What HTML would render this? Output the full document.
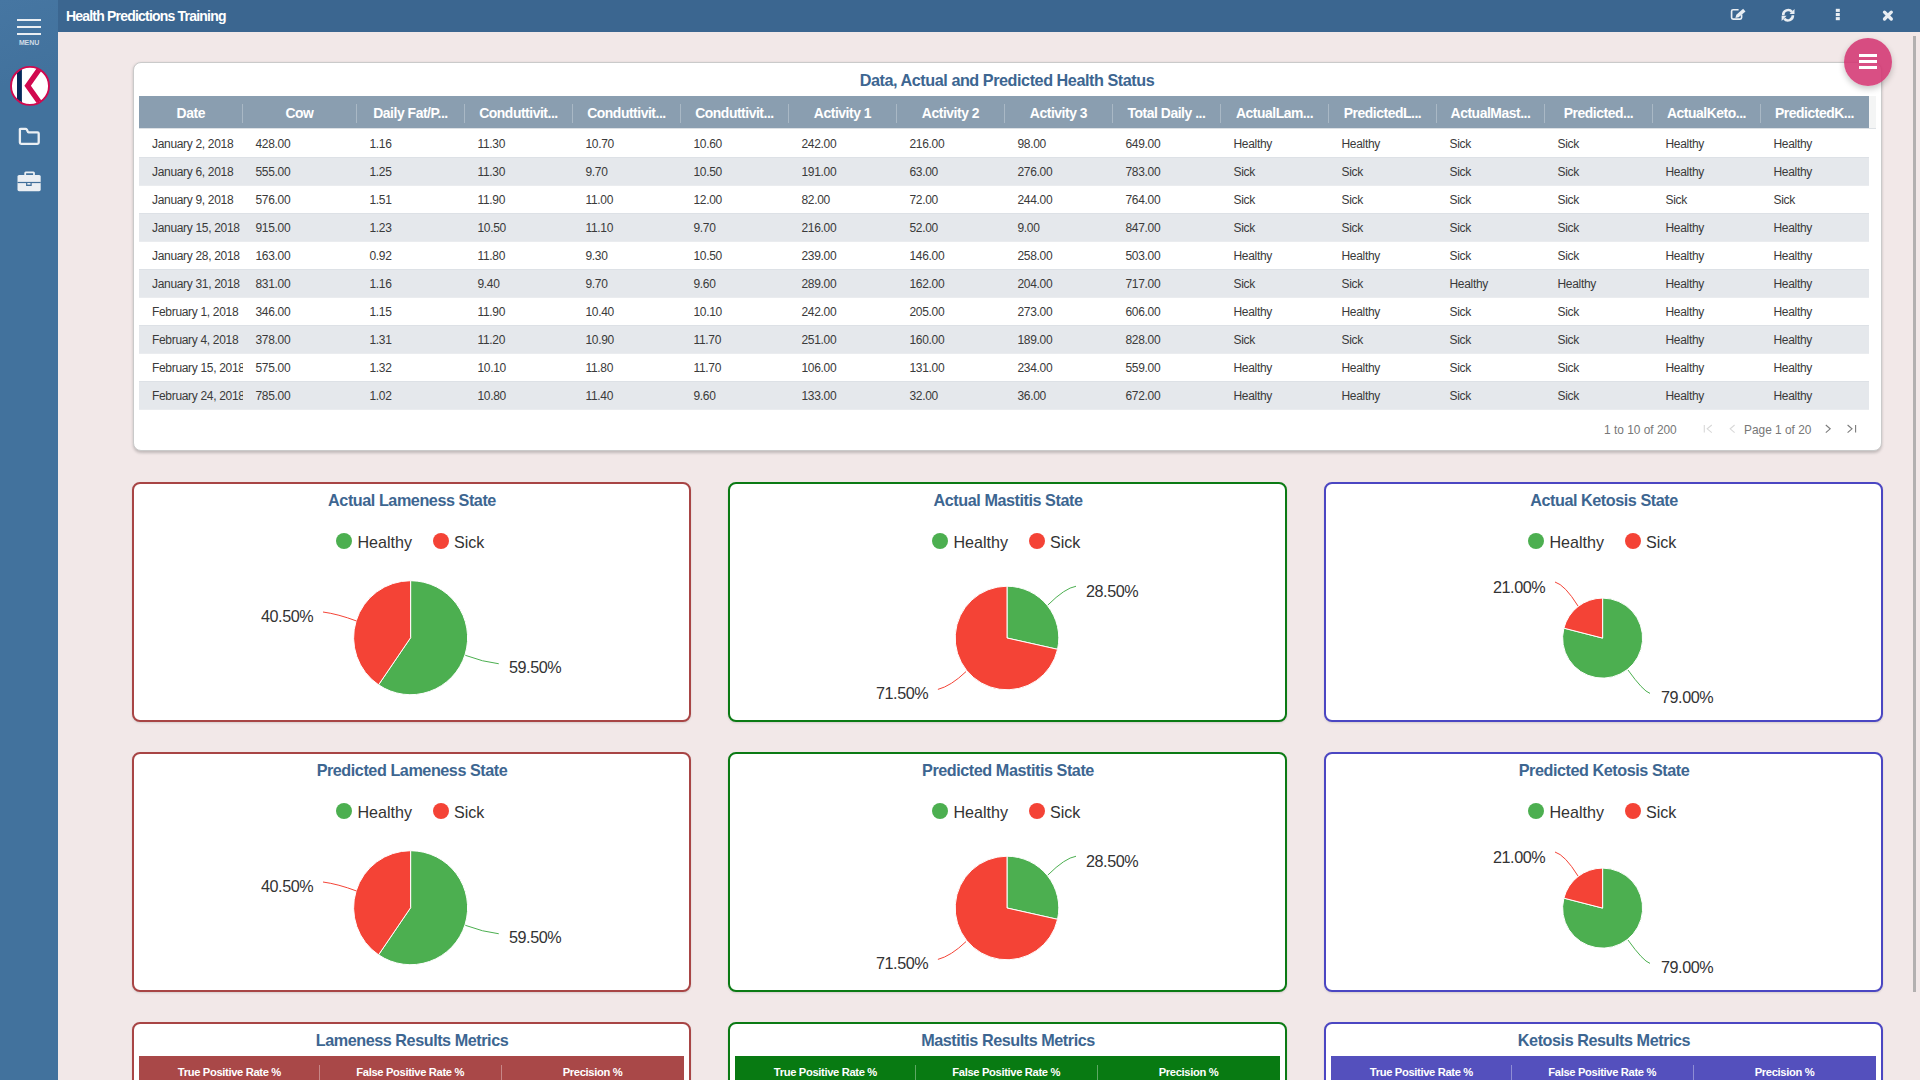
<!DOCTYPE html><html><head><meta charset="utf-8"><title>Health Predictions Training</title><style>
*{box-sizing:border-box;margin:0;padding:0}
html,body{width:1920px;height:1080px;overflow:hidden;background:#f2e8e8;font-family:"Liberation Sans",sans-serif}
.abs{position:absolute}
#side{left:0;top:0;width:58px;height:1080px;background:linear-gradient(160deg,#4676a2 0%,#42729d 8%,#42729d 100%)}
#top{left:58px;top:0;width:1862px;height:32px;background:#3b6690}
#top .t{position:absolute;left:8px;top:8px;color:#fff;font-weight:bold;font-size:14px;letter-spacing:-0.8px;line-height:16px}
.card{position:absolute;background:#fff;border-radius:8px}
#tcard{left:133px;top:62px;width:1749px;height:388.5px;box-shadow:0 1.5px 3px rgba(0,0,0,.2);border:1.5px solid #cacaca}
.ctitle{position:absolute;left:0;width:100%;text-align:center;color:#3d6691;font-weight:bold;font-size:16.2px;letter-spacing:-0.45px;line-height:18px}
.hdr{position:absolute;left:139px;top:96px;width:1730px;height:32px;background:#8a9eb0}
.hcell{position:absolute;top:1px;height:32px;line-height:32px;text-align:center;color:#fff;font-weight:bold;font-size:13.9px;letter-spacing:-0.45px;white-space:nowrap;overflow:hidden}
.hdiv{position:absolute;top:8px;width:1px;height:19px;background:#a9b8c5}
.row{position:absolute;left:139px;width:1730px;height:28px}
.row.alt{background:#e5e8ec;box-shadow:inset 0 1px #dde1e6,0 1px #eaecef}
.cell{position:absolute;top:1px;height:28px;line-height:28px;padding-left:13px;color:#3a3a3a;font-size:12px;letter-spacing:-0.32px;white-space:nowrap;overflow:hidden}
.pag{position:absolute;top:422px;font-size:11.9px;color:#777;line-height:16px;white-space:nowrap}
.pcard{position:absolute;width:558px;height:239px;border:2px solid #a84545;border-radius:8px;background:#fff;box-shadow:0 1px 2px rgba(0,0,0,.12)}
.leg{position:absolute;font-size:16.1px;color:#333;line-height:20px;white-space:nowrap}
.dot{position:absolute;width:16px;height:16px;border-radius:50%}
.plab{position:absolute;font-size:16.2px;letter-spacing:-0.45px;color:#333;line-height:18px;white-space:nowrap;margin-top:-1.1px}
.mhdr{position:absolute;height:32px}
.mcell{position:absolute;top:0;height:32px;line-height:32px;text-align:center;color:#fff;font-weight:bold;font-size:11.2px;letter-spacing:-0.35px;white-space:nowrap}
.mdiv{position:absolute;top:9px;width:1px;height:24px;background:rgba(255,255,255,.35)}
</style></head><body>
<div id="side" class="abs">
<div class="abs" style="left:17px;top:19px;width:24px;height:2px;background:#ebeff3"></div>
<div class="abs" style="left:17px;top:26px;width:24px;height:2px;background:#ebeff3"></div>
<div class="abs" style="left:17px;top:33px;width:24px;height:2px;background:#ebeff3"></div>
<div class="abs" style="left:0;top:39px;width:58px;text-align:center;color:#cfdbe6;font-size:7px;font-weight:bold;line-height:8px;letter-spacing:-0.1px">MENU</div>
<svg class="abs" style="left:0;top:60px" width="58" height="140" viewBox="0 0 58 140">
<defs><clipPath id="lc"><circle cx="30" cy="25.9" r="18.6"/></clipPath></defs>
<circle cx="30" cy="25.9" r="19" fill="#fff"/>
<g clip-path="url(#lc)">
<rect x="17" y="0" width="4.9" height="60" fill="#06295a"/>
<polyline points="42.05,5.3 27.65,25.7 42.05,46.1" fill="none" stroke="#d1084e" stroke-width="5.3" stroke-miterlimit="10"/>
</g>
<circle cx="30" cy="25.9" r="19" fill="none" stroke="#d1084e" stroke-width="1.9"/>
<path d="M19.9,69 Q19.9,68.8 21,68.8 L25.5,68.8 Q26.3,68.8 26.8,69.6 L27.6,71.2 Q27.9,72.3 28.6,72.3 L37.4,72.3 Q38.7,72.3 38.7,73.6 L38.7,82.6 Q38.7,83.9 37.4,83.9 L21.2,83.9 Q19.9,83.9 19.9,82.6 Z" fill="none" stroke="#ebeff3" stroke-width="2.3" stroke-linejoin="round"/>
<path d="M25.2,115.5 L25.2,113 Q25.2,112.4 25.8,112.4 L33.4,112.4 Q34,112.4 34,113 L34,115.5" fill="none" stroke="#ebeff3" stroke-width="1.8"/>
<rect x="17.5" y="115" width="23.2" height="16.2" rx="1.6" fill="#ebeff3"/>
<rect x="17.5" y="121.9" width="23.2" height="1.2" fill="#41709b"/>
<rect x="26.1" y="123" width="5.6" height="3" fill="#41709b"/>
<rect x="27.3" y="123" width="3.2" height="1.6" fill="#ebeff3"/>
</svg>
</div>
<div id="top" class="abs"><div class="t">Health Predictions Training</div></div>
<svg class="abs" style="left:1722px;top:2px" width="180" height="26" viewBox="0 0 180 26">
<path d="M16.6,7.7 L11.1,7.7 Q9.6,7.7 9.6,9.2 L9.6,15.6 Q9.6,17.1 11.1,17.1 L18.1,17.1 Q19.6,17.1 19.6,15.6 L19.6,12.6" fill="none" stroke="#e9eef3" stroke-width="1.65"/>
<polygon points="13.4,15.9 14.33,12.63 21.13,6.83 23.47,9.57 16.67,15.37" fill="#e9eef3"/>
<path d="M61.2,13.2 A4.9,4.9 0 0 1 69.9,9.9" fill="none" stroke="#e9eef3" stroke-width="2.6"/>
<polygon points="72.5,7.1 72.5,12.1 67.5,12.1" fill="#e9eef3"/>
<path d="M70.9,13.3 A4.9,4.9 0 0 1 62.2,16.6" fill="none" stroke="#e9eef3" stroke-width="2.6"/>
<polygon points="59.6,18.9 59.6,13.75 64.6,13.75" fill="#e9eef3"/>
<rect x="113.8" y="6.8" width="4" height="3.1" fill="#e9eef3"/>
<rect x="113.8" y="11" width="4" height="3.1" fill="#e9eef3"/>
<rect x="113.8" y="15.1" width="4" height="3.1" fill="#e9eef3"/>
<path d="M162.5,10.2 L169.3,17 M169.3,10.2 L162.5,17" stroke="#e9eef3" stroke-width="3.3" stroke-linecap="round"/>
</svg>
<div id="tcard" class="card"></div>
<div class="ctitle" style="left:133px;width:1748px;top:70.8px">Data, Actual and Predicted Health Status</div>
<div class="hdr">
<div class="hcell" style="left:0.0px;width:103.5px">Date</div>
<div class="hdiv" style="left:102.5px"></div>
<div class="hcell" style="left:103.5px;width:114.0px">Cow</div>
<div class="hdiv" style="left:216.5px"></div>
<div class="hcell" style="left:217.5px;width:108.0px">Daily Fat/P...</div>
<div class="hdiv" style="left:324.5px"></div>
<div class="hcell" style="left:325.5px;width:108.0px">Conduttivit...</div>
<div class="hdiv" style="left:432.5px"></div>
<div class="hcell" style="left:433.5px;width:108.0px">Conduttivit...</div>
<div class="hdiv" style="left:540.5px"></div>
<div class="hcell" style="left:541.5px;width:108.0px">Conduttivit...</div>
<div class="hdiv" style="left:648.5px"></div>
<div class="hcell" style="left:649.5px;width:108.0px">Activity 1</div>
<div class="hdiv" style="left:756.5px"></div>
<div class="hcell" style="left:757.5px;width:108.0px">Activity 2</div>
<div class="hdiv" style="left:864.5px"></div>
<div class="hcell" style="left:865.5px;width:108.0px">Activity 3</div>
<div class="hdiv" style="left:972.5px"></div>
<div class="hcell" style="left:973.5px;width:108.0px">Total Daily ...</div>
<div class="hdiv" style="left:1080.5px"></div>
<div class="hcell" style="left:1081.5px;width:108.0px">ActualLam...</div>
<div class="hdiv" style="left:1188.5px"></div>
<div class="hcell" style="left:1189.5px;width:108.0px">PredictedL...</div>
<div class="hdiv" style="left:1296.5px"></div>
<div class="hcell" style="left:1297.5px;width:108.0px">ActualMast...</div>
<div class="hdiv" style="left:1404.5px"></div>
<div class="hcell" style="left:1405.5px;width:108.0px">Predicted...</div>
<div class="hdiv" style="left:1512.5px"></div>
<div class="hcell" style="left:1513.5px;width:108.0px">ActualKeto...</div>
<div class="hdiv" style="left:1620.5px"></div>
<div class="hcell" style="left:1621.5px;width:108.0px">PredictedK...</div>
</div>
<div class="abs" style="left:139px;top:128px;width:1737px;height:1px;background:#dde1e5"></div>
<div class="abs" style="left:1869px;top:96px;width:7px;height:32px;background:#f4f5f5"></div>
<div class="row" style="top:129px">
<div class="cell" style="left:0.0px;width:103.5px">January 2, 2018</div>
<div class="cell" style="left:103.5px;width:114.0px">428.00</div>
<div class="cell" style="left:217.5px;width:108.0px">1.16</div>
<div class="cell" style="left:325.5px;width:108.0px">11.30</div>
<div class="cell" style="left:433.5px;width:108.0px">10.70</div>
<div class="cell" style="left:541.5px;width:108.0px">10.60</div>
<div class="cell" style="left:649.5px;width:108.0px">242.00</div>
<div class="cell" style="left:757.5px;width:108.0px">216.00</div>
<div class="cell" style="left:865.5px;width:108.0px">98.00</div>
<div class="cell" style="left:973.5px;width:108.0px">649.00</div>
<div class="cell" style="left:1081.5px;width:108.0px">Healthy</div>
<div class="cell" style="left:1189.5px;width:108.0px">Healthy</div>
<div class="cell" style="left:1297.5px;width:108.0px">Sick</div>
<div class="cell" style="left:1405.5px;width:108.0px">Sick</div>
<div class="cell" style="left:1513.5px;width:108.0px">Healthy</div>
<div class="cell" style="left:1621.5px;width:108.0px">Healthy</div>
</div>
<div class="row alt" style="top:157px">
<div class="cell" style="left:0.0px;width:103.5px">January 6, 2018</div>
<div class="cell" style="left:103.5px;width:114.0px">555.00</div>
<div class="cell" style="left:217.5px;width:108.0px">1.25</div>
<div class="cell" style="left:325.5px;width:108.0px">11.30</div>
<div class="cell" style="left:433.5px;width:108.0px">9.70</div>
<div class="cell" style="left:541.5px;width:108.0px">10.50</div>
<div class="cell" style="left:649.5px;width:108.0px">191.00</div>
<div class="cell" style="left:757.5px;width:108.0px">63.00</div>
<div class="cell" style="left:865.5px;width:108.0px">276.00</div>
<div class="cell" style="left:973.5px;width:108.0px">783.00</div>
<div class="cell" style="left:1081.5px;width:108.0px">Sick</div>
<div class="cell" style="left:1189.5px;width:108.0px">Sick</div>
<div class="cell" style="left:1297.5px;width:108.0px">Sick</div>
<div class="cell" style="left:1405.5px;width:108.0px">Sick</div>
<div class="cell" style="left:1513.5px;width:108.0px">Healthy</div>
<div class="cell" style="left:1621.5px;width:108.0px">Healthy</div>
</div>
<div class="row" style="top:185px">
<div class="cell" style="left:0.0px;width:103.5px">January 9, 2018</div>
<div class="cell" style="left:103.5px;width:114.0px">576.00</div>
<div class="cell" style="left:217.5px;width:108.0px">1.51</div>
<div class="cell" style="left:325.5px;width:108.0px">11.90</div>
<div class="cell" style="left:433.5px;width:108.0px">11.00</div>
<div class="cell" style="left:541.5px;width:108.0px">12.00</div>
<div class="cell" style="left:649.5px;width:108.0px">82.00</div>
<div class="cell" style="left:757.5px;width:108.0px">72.00</div>
<div class="cell" style="left:865.5px;width:108.0px">244.00</div>
<div class="cell" style="left:973.5px;width:108.0px">764.00</div>
<div class="cell" style="left:1081.5px;width:108.0px">Sick</div>
<div class="cell" style="left:1189.5px;width:108.0px">Sick</div>
<div class="cell" style="left:1297.5px;width:108.0px">Sick</div>
<div class="cell" style="left:1405.5px;width:108.0px">Sick</div>
<div class="cell" style="left:1513.5px;width:108.0px">Sick</div>
<div class="cell" style="left:1621.5px;width:108.0px">Sick</div>
</div>
<div class="row alt" style="top:213px">
<div class="cell" style="left:0.0px;width:103.5px">January 15, 2018</div>
<div class="cell" style="left:103.5px;width:114.0px">915.00</div>
<div class="cell" style="left:217.5px;width:108.0px">1.23</div>
<div class="cell" style="left:325.5px;width:108.0px">10.50</div>
<div class="cell" style="left:433.5px;width:108.0px">11.10</div>
<div class="cell" style="left:541.5px;width:108.0px">9.70</div>
<div class="cell" style="left:649.5px;width:108.0px">216.00</div>
<div class="cell" style="left:757.5px;width:108.0px">52.00</div>
<div class="cell" style="left:865.5px;width:108.0px">9.00</div>
<div class="cell" style="left:973.5px;width:108.0px">847.00</div>
<div class="cell" style="left:1081.5px;width:108.0px">Sick</div>
<div class="cell" style="left:1189.5px;width:108.0px">Sick</div>
<div class="cell" style="left:1297.5px;width:108.0px">Sick</div>
<div class="cell" style="left:1405.5px;width:108.0px">Sick</div>
<div class="cell" style="left:1513.5px;width:108.0px">Healthy</div>
<div class="cell" style="left:1621.5px;width:108.0px">Healthy</div>
</div>
<div class="row" style="top:241px">
<div class="cell" style="left:0.0px;width:103.5px">January 28, 2018</div>
<div class="cell" style="left:103.5px;width:114.0px">163.00</div>
<div class="cell" style="left:217.5px;width:108.0px">0.92</div>
<div class="cell" style="left:325.5px;width:108.0px">11.80</div>
<div class="cell" style="left:433.5px;width:108.0px">9.30</div>
<div class="cell" style="left:541.5px;width:108.0px">10.50</div>
<div class="cell" style="left:649.5px;width:108.0px">239.00</div>
<div class="cell" style="left:757.5px;width:108.0px">146.00</div>
<div class="cell" style="left:865.5px;width:108.0px">258.00</div>
<div class="cell" style="left:973.5px;width:108.0px">503.00</div>
<div class="cell" style="left:1081.5px;width:108.0px">Healthy</div>
<div class="cell" style="left:1189.5px;width:108.0px">Healthy</div>
<div class="cell" style="left:1297.5px;width:108.0px">Sick</div>
<div class="cell" style="left:1405.5px;width:108.0px">Sick</div>
<div class="cell" style="left:1513.5px;width:108.0px">Healthy</div>
<div class="cell" style="left:1621.5px;width:108.0px">Healthy</div>
</div>
<div class="row alt" style="top:269px">
<div class="cell" style="left:0.0px;width:103.5px">January 31, 2018</div>
<div class="cell" style="left:103.5px;width:114.0px">831.00</div>
<div class="cell" style="left:217.5px;width:108.0px">1.16</div>
<div class="cell" style="left:325.5px;width:108.0px">9.40</div>
<div class="cell" style="left:433.5px;width:108.0px">9.70</div>
<div class="cell" style="left:541.5px;width:108.0px">9.60</div>
<div class="cell" style="left:649.5px;width:108.0px">289.00</div>
<div class="cell" style="left:757.5px;width:108.0px">162.00</div>
<div class="cell" style="left:865.5px;width:108.0px">204.00</div>
<div class="cell" style="left:973.5px;width:108.0px">717.00</div>
<div class="cell" style="left:1081.5px;width:108.0px">Sick</div>
<div class="cell" style="left:1189.5px;width:108.0px">Sick</div>
<div class="cell" style="left:1297.5px;width:108.0px">Healthy</div>
<div class="cell" style="left:1405.5px;width:108.0px">Healthy</div>
<div class="cell" style="left:1513.5px;width:108.0px">Healthy</div>
<div class="cell" style="left:1621.5px;width:108.0px">Healthy</div>
</div>
<div class="row" style="top:297px">
<div class="cell" style="left:0.0px;width:103.5px">February 1, 2018</div>
<div class="cell" style="left:103.5px;width:114.0px">346.00</div>
<div class="cell" style="left:217.5px;width:108.0px">1.15</div>
<div class="cell" style="left:325.5px;width:108.0px">11.90</div>
<div class="cell" style="left:433.5px;width:108.0px">10.40</div>
<div class="cell" style="left:541.5px;width:108.0px">10.10</div>
<div class="cell" style="left:649.5px;width:108.0px">242.00</div>
<div class="cell" style="left:757.5px;width:108.0px">205.00</div>
<div class="cell" style="left:865.5px;width:108.0px">273.00</div>
<div class="cell" style="left:973.5px;width:108.0px">606.00</div>
<div class="cell" style="left:1081.5px;width:108.0px">Healthy</div>
<div class="cell" style="left:1189.5px;width:108.0px">Healthy</div>
<div class="cell" style="left:1297.5px;width:108.0px">Sick</div>
<div class="cell" style="left:1405.5px;width:108.0px">Sick</div>
<div class="cell" style="left:1513.5px;width:108.0px">Healthy</div>
<div class="cell" style="left:1621.5px;width:108.0px">Healthy</div>
</div>
<div class="row alt" style="top:325px">
<div class="cell" style="left:0.0px;width:103.5px">February 4, 2018</div>
<div class="cell" style="left:103.5px;width:114.0px">378.00</div>
<div class="cell" style="left:217.5px;width:108.0px">1.31</div>
<div class="cell" style="left:325.5px;width:108.0px">11.20</div>
<div class="cell" style="left:433.5px;width:108.0px">10.90</div>
<div class="cell" style="left:541.5px;width:108.0px">11.70</div>
<div class="cell" style="left:649.5px;width:108.0px">251.00</div>
<div class="cell" style="left:757.5px;width:108.0px">160.00</div>
<div class="cell" style="left:865.5px;width:108.0px">189.00</div>
<div class="cell" style="left:973.5px;width:108.0px">828.00</div>
<div class="cell" style="left:1081.5px;width:108.0px">Sick</div>
<div class="cell" style="left:1189.5px;width:108.0px">Sick</div>
<div class="cell" style="left:1297.5px;width:108.0px">Sick</div>
<div class="cell" style="left:1405.5px;width:108.0px">Sick</div>
<div class="cell" style="left:1513.5px;width:108.0px">Healthy</div>
<div class="cell" style="left:1621.5px;width:108.0px">Healthy</div>
</div>
<div class="row" style="top:353px">
<div class="cell" style="left:0.0px;width:103.5px">February 15, 2018</div>
<div class="cell" style="left:103.5px;width:114.0px">575.00</div>
<div class="cell" style="left:217.5px;width:108.0px">1.32</div>
<div class="cell" style="left:325.5px;width:108.0px">10.10</div>
<div class="cell" style="left:433.5px;width:108.0px">11.80</div>
<div class="cell" style="left:541.5px;width:108.0px">11.70</div>
<div class="cell" style="left:649.5px;width:108.0px">106.00</div>
<div class="cell" style="left:757.5px;width:108.0px">131.00</div>
<div class="cell" style="left:865.5px;width:108.0px">234.00</div>
<div class="cell" style="left:973.5px;width:108.0px">559.00</div>
<div class="cell" style="left:1081.5px;width:108.0px">Healthy</div>
<div class="cell" style="left:1189.5px;width:108.0px">Healthy</div>
<div class="cell" style="left:1297.5px;width:108.0px">Sick</div>
<div class="cell" style="left:1405.5px;width:108.0px">Sick</div>
<div class="cell" style="left:1513.5px;width:108.0px">Healthy</div>
<div class="cell" style="left:1621.5px;width:108.0px">Healthy</div>
</div>
<div class="row alt" style="top:381px">
<div class="cell" style="left:0.0px;width:103.5px">February 24, 2018</div>
<div class="cell" style="left:103.5px;width:114.0px">785.00</div>
<div class="cell" style="left:217.5px;width:108.0px">1.02</div>
<div class="cell" style="left:325.5px;width:108.0px">10.80</div>
<div class="cell" style="left:433.5px;width:108.0px">11.40</div>
<div class="cell" style="left:541.5px;width:108.0px">9.60</div>
<div class="cell" style="left:649.5px;width:108.0px">133.00</div>
<div class="cell" style="left:757.5px;width:108.0px">32.00</div>
<div class="cell" style="left:865.5px;width:108.0px">36.00</div>
<div class="cell" style="left:973.5px;width:108.0px">672.00</div>
<div class="cell" style="left:1081.5px;width:108.0px">Healthy</div>
<div class="cell" style="left:1189.5px;width:108.0px">Healthy</div>
<div class="cell" style="left:1297.5px;width:108.0px">Sick</div>
<div class="cell" style="left:1405.5px;width:108.0px">Sick</div>
<div class="cell" style="left:1513.5px;width:108.0px">Healthy</div>
<div class="cell" style="left:1621.5px;width:108.0px">Healthy</div>
</div>
<div class="pag" style="left:1604px">1 to 10 of 200</div>
<div class="pag" style="left:1744px">Page 1 of 20</div>
<svg class="abs" style="left:1700px;top:422px" width="160" height="16" viewBox="0 0 160 16">
<path d="M4.3,3 L4.3,10.6" stroke="#d8d8d8" stroke-width="1.1"/>
<path d="M11.8,3 L7.2,6.8 L11.8,10.6" fill="none" stroke="#d8d8d8" stroke-width="1.1"/>
<path d="M34.6,3 L30.2,6.8 L34.6,10.6" fill="none" stroke="#d8d8d8" stroke-width="1.1"/>
<path d="M125.8,3 L130.2,6.8 L125.8,10.6" fill="none" stroke="#7a7a7a" stroke-width="1.1"/>
<path d="M147.6,3 L152,6.8 L147.6,10.6" fill="none" stroke="#7a7a7a" stroke-width="1.1"/>
<path d="M155.6,3 L155.6,10.6" stroke="#7a7a7a" stroke-width="1.1"/>
</svg>
<div class="pcard" style="left:132px;top:482px;width:559px;height:240px;border-color:#a84545"></div>
<div class="ctitle" style="left:133px;width:558px;top:491.2px">Actual Lameness State</div>
<div class="dot" style="left:335.75px;top:533px;background:#4caf50"></div>
<div class="leg" style="left:357.5px;top:531.5px">Healthy</div>
<div class="dot" style="left:433px;top:533px;background:#f44336"></div>
<div class="leg" style="left:454px;top:531.5px">Sick</div>
<svg class="abs" style="left:133px;top:483px" width="558" height="239" viewBox="0 0 558 239"><path d="M277.6,154.7 L277.60,97.70 A57,57 0 1 1 245.56,201.84 Z" fill="#4caf50" stroke="#fff" stroke-width="1"/><path d="M277.6,154.7 L245.56,201.84 A57,57 0 0 1 277.60,97.70 Z" fill="#f44336" stroke="#fff" stroke-width="1"/><path d="M223.6,138 Q205,131 190,129" fill="none" stroke="#f44336" stroke-width="1"/><path d="M332.3,172.3 Q350,179 365.75,180.75" fill="none" stroke="#4caf50" stroke-width="1"/></svg>
<div class="plab" style="left:261px;top:608px">40.50%</div>
<div class="plab" style="left:509px;top:659px">59.50%</div>
<div class="pcard" style="left:728px;top:482px;width:559px;height:240px;border-color:#0b7a14"></div>
<div class="ctitle" style="left:729px;width:558px;top:491.2px">Actual Mastitis State</div>
<div class="dot" style="left:931.75px;top:533px;background:#4caf50"></div>
<div class="leg" style="left:953.5px;top:531.5px">Healthy</div>
<div class="dot" style="left:1029px;top:533px;background:#f44336"></div>
<div class="leg" style="left:1050px;top:531.5px">Sick</div>
<svg class="abs" style="left:729px;top:483px" width="558" height="239" viewBox="0 0 558 239"><path d="M278,155 L278.00,103.20 A51.8,51.8 0 0 1 328.55,166.30 Z" fill="#4caf50" stroke="#fff" stroke-width="1"/><path d="M278,155 L328.55,166.30 A51.8,51.8 0 1 1 278.00,103.20 Z" fill="#f44336" stroke="#fff" stroke-width="1"/><path d="M318.9,122 Q336,105 347,103.25" fill="none" stroke="#4caf50" stroke-width="1"/><path d="M237,188.6 Q222,203 208.9,206.4" fill="none" stroke="#f44336" stroke-width="1"/></svg>
<div class="plab" style="left:1086px;top:583px">28.50%</div>
<div class="plab" style="left:876px;top:685px">71.50%</div>
<div class="pcard" style="left:1324px;top:482px;width:559px;height:240px;border-color:#4b46c2"></div>
<div class="ctitle" style="left:1325px;width:558px;top:491.2px">Actual Ketosis State</div>
<div class="dot" style="left:1527.75px;top:533px;background:#4caf50"></div>
<div class="leg" style="left:1549.5px;top:531.5px">Healthy</div>
<div class="dot" style="left:1625px;top:533px;background:#f44336"></div>
<div class="leg" style="left:1646px;top:531.5px">Sick</div>
<svg class="abs" style="left:1325px;top:483px" width="558" height="239" viewBox="0 0 558 239"><path d="M277.6,155.1 L277.60,115.10 A40.0,40.0 0 1 1 238.86,145.15 Z" fill="#4caf50" stroke="#fff" stroke-width="1"/><path d="M277.6,155.1 L238.86,145.15 A40.0,40.0 0 0 1 277.60,115.10 Z" fill="#f44336" stroke="#fff" stroke-width="1"/><path d="M253,123 Q240,102 230,99" fill="none" stroke="#f44336" stroke-width="1"/><path d="M303,187 Q318,208 325,210.4" fill="none" stroke="#4caf50" stroke-width="1"/></svg>
<div class="plab" style="left:1493px;top:579px">21.00%</div>
<div class="plab" style="left:1661px;top:689px">79.00%</div>
<div class="pcard" style="left:132px;top:752px;width:559px;height:240px;border-color:#a84545"></div>
<div class="ctitle" style="left:133px;width:558px;top:761.2px">Predicted Lameness State</div>
<div class="dot" style="left:335.75px;top:803px;background:#4caf50"></div>
<div class="leg" style="left:357.5px;top:801.5px">Healthy</div>
<div class="dot" style="left:433px;top:803px;background:#f44336"></div>
<div class="leg" style="left:454px;top:801.5px">Sick</div>
<svg class="abs" style="left:133px;top:753px" width="558" height="239" viewBox="0 0 558 239"><path d="M277.6,154.7 L277.60,97.70 A57,57 0 1 1 245.56,201.84 Z" fill="#4caf50" stroke="#fff" stroke-width="1"/><path d="M277.6,154.7 L245.56,201.84 A57,57 0 0 1 277.60,97.70 Z" fill="#f44336" stroke="#fff" stroke-width="1"/><path d="M223.6,138 Q205,131 190,129" fill="none" stroke="#f44336" stroke-width="1"/><path d="M332.3,172.3 Q350,179 365.75,180.75" fill="none" stroke="#4caf50" stroke-width="1"/></svg>
<div class="plab" style="left:261px;top:878px">40.50%</div>
<div class="plab" style="left:509px;top:929px">59.50%</div>
<div class="pcard" style="left:728px;top:752px;width:559px;height:240px;border-color:#0b7a14"></div>
<div class="ctitle" style="left:729px;width:558px;top:761.2px">Predicted Mastitis State</div>
<div class="dot" style="left:931.75px;top:803px;background:#4caf50"></div>
<div class="leg" style="left:953.5px;top:801.5px">Healthy</div>
<div class="dot" style="left:1029px;top:803px;background:#f44336"></div>
<div class="leg" style="left:1050px;top:801.5px">Sick</div>
<svg class="abs" style="left:729px;top:753px" width="558" height="239" viewBox="0 0 558 239"><path d="M278,155 L278.00,103.20 A51.8,51.8 0 0 1 328.55,166.30 Z" fill="#4caf50" stroke="#fff" stroke-width="1"/><path d="M278,155 L328.55,166.30 A51.8,51.8 0 1 1 278.00,103.20 Z" fill="#f44336" stroke="#fff" stroke-width="1"/><path d="M318.9,122 Q336,105 347,103.25" fill="none" stroke="#4caf50" stroke-width="1"/><path d="M237,188.6 Q222,203 208.9,206.4" fill="none" stroke="#f44336" stroke-width="1"/></svg>
<div class="plab" style="left:1086px;top:853px">28.50%</div>
<div class="plab" style="left:876px;top:955px">71.50%</div>
<div class="pcard" style="left:1324px;top:752px;width:559px;height:240px;border-color:#4b46c2"></div>
<div class="ctitle" style="left:1325px;width:558px;top:761.2px">Predicted Ketosis State</div>
<div class="dot" style="left:1527.75px;top:803px;background:#4caf50"></div>
<div class="leg" style="left:1549.5px;top:801.5px">Healthy</div>
<div class="dot" style="left:1625px;top:803px;background:#f44336"></div>
<div class="leg" style="left:1646px;top:801.5px">Sick</div>
<svg class="abs" style="left:1325px;top:753px" width="558" height="239" viewBox="0 0 558 239"><path d="M277.6,155.1 L277.60,115.10 A40.0,40.0 0 1 1 238.86,145.15 Z" fill="#4caf50" stroke="#fff" stroke-width="1"/><path d="M277.6,155.1 L238.86,145.15 A40.0,40.0 0 0 1 277.60,115.10 Z" fill="#f44336" stroke="#fff" stroke-width="1"/><path d="M253,123 Q240,102 230,99" fill="none" stroke="#f44336" stroke-width="1"/><path d="M303,187 Q318,208 325,210.4" fill="none" stroke="#4caf50" stroke-width="1"/></svg>
<div class="plab" style="left:1493px;top:849px">21.00%</div>
<div class="plab" style="left:1661px;top:959px">79.00%</div>
<div class="pcard" style="left:132px;top:1022px;width:559px;height:120px;border-color:#a84545"></div>
<div class="ctitle" style="left:133px;width:558px;top:1031.2px">Lameness Results Metrics</div>
<div class="mhdr" style="left:139.4px;top:1056px;width:544.6px;background:#a94848">
<div class="mcell" style="left:0.0px;width:180.0px">True Positive Rate %</div>
<div class="mdiv" style="left:180.0px"></div>
<div class="mcell" style="left:180.0px;width:181.6px">False Positive Rate %</div>
<div class="mdiv" style="left:361.6px"></div>
<div class="mcell" style="left:361.6px;width:183.0px">Precision %</div>
</div>
<div class="pcard" style="left:728px;top:1022px;width:559px;height:120px;border-color:#0b7a14"></div>
<div class="ctitle" style="left:729px;width:558px;top:1031.2px">Mastitis Results Metrics</div>
<div class="mhdr" style="left:735.4px;top:1056px;width:544.6px;background:#087a12">
<div class="mcell" style="left:0.0px;width:180.0px">True Positive Rate %</div>
<div class="mdiv" style="left:180.0px"></div>
<div class="mcell" style="left:180.0px;width:181.6px">False Positive Rate %</div>
<div class="mdiv" style="left:361.6px"></div>
<div class="mcell" style="left:361.6px;width:183.0px">Precision %</div>
</div>
<div class="pcard" style="left:1324px;top:1022px;width:559px;height:120px;border-color:#4b46c2"></div>
<div class="ctitle" style="left:1325px;width:558px;top:1031.2px">Ketosis Results Metrics</div>
<div class="mhdr" style="left:1331.4px;top:1056px;width:544.6px;background:#5450bd">
<div class="mcell" style="left:0.0px;width:180.0px">True Positive Rate %</div>
<div class="mdiv" style="left:180.0px"></div>
<div class="mcell" style="left:180.0px;width:181.6px">False Positive Rate %</div>
<div class="mdiv" style="left:361.6px"></div>
<div class="mcell" style="left:361.6px;width:183.0px">Precision %</div>
</div>
<div class="abs" style="left:1844px;top:38px;width:48px;height:48px;border-radius:50%;background:rgba(211,50,112,.86);box-shadow:0 3px 6px rgba(0,0,0,.22)"></div>
<div class="abs" style="left:1858.8px;top:54px;width:18.7px;height:3px;background:#fff"></div>
<div class="abs" style="left:1858.8px;top:59.8px;width:18.7px;height:3px;background:#fff"></div>
<div class="abs" style="left:1858.8px;top:65.9px;width:18.7px;height:3px;background:#fff"></div>
<div class="abs" style="left:1913px;top:36px;width:3px;height:956px;background:#b3b0b0"></div>
</body></html>
